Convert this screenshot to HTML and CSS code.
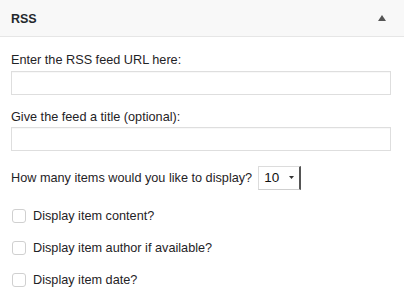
FILE: index.html
```html
<!DOCTYPE html>
<html>
<head>
<meta charset="utf-8">
<link rel="stylesheet" href="styles.css">
</head>
<body>
<div class="widget">
  <div class="widget-head">
    <span class="widget-title">RSS</span>
    <svg class="toggle" width="8" height="6" viewBox="0 0 8 6"><path d="M0 6 L4 0 L8 6 Z" fill="#555"/></svg>
  </div>
  <div class="widget-body">
    <label class="field-label">Enter the RSS feed URL here:</label>
    <div class="text-input"></div>
    <label class="field-label second">Give the feed a title (optional):</label>
    <div class="text-input"></div>
    <div class="select-row">
      <span class="select-label">How many items would you like to display?</span>
      <span class="select">
        <span class="select-value">10</span>
        <svg class="select-arrow" width="5" height="3" viewBox="0 0 5 3"><path d="M0 0 L5 0 L2.5 3 Z" fill="#333"/></svg>
      </span>
    </div>
    <div class="check-row"><span class="checkbox"></span><span class="check-label">Display item content?</span></div>
    <div class="check-row"><span class="checkbox"></span><span class="check-label">Display item author if available?</span></div>
    <div class="check-row"><span class="checkbox"></span><span class="check-label">Display item date?</span></div>
  </div>
</div>
</body>
</html>
```
FILE: styles.css
```css
html, body {
  margin: 0;
  padding: 0;
  background: #fff;
}
body {
  font-family: "Liberation Sans", Arial, Helvetica, sans-serif;
  font-size: 12.7px;
  color: #1f2326;
}
.widget {
  width: 404px;
}
.widget-head {
  height: 37px;
  background: #f8f8f8;
  border-bottom: 1px solid #e6e6e6;
  display: flex;
  align-items: center;
  justify-content: space-between;
  padding: 0 18px 0 11px;
  box-sizing: border-box;
}
.widget-title {
  font-weight: bold;
  font-size: 12.5px;
  color: #23282d;
  padding-top: 1px;
}
.toggle {
  margin-top: -1px;
}
.widget-body {
  padding: 15px 13px 0 11px;
  display: flex;
  flex-direction: column;
}
.field-label {
  display: block;
  line-height: 16px;
  height: 16px;
  margin-bottom: 3px;
}
.field-label.second {
  margin-top: 14px;
  margin-bottom: 2px;
}
.text-input {
  height: 22px;
  border: 1px solid #dedede;
  background: #fff;
  box-shadow: inset 0 1px 1px rgba(0,0,0,0.03);
}
.select-row {
  display: flex;
  align-items: center;
  margin-top: 14px;
  height: 25px;
}
.select-label {
  line-height: 16px;
}
.select {
  margin-left: 6px;
  width: 43px;
  height: 24px;
  box-sizing: border-box;
  border: 1px solid #dcdcdc;
  border-right: 2px solid #555;
  border-bottom-color: #cfcfcf;
  display: flex;
  align-items: center;
  justify-content: space-between;
  padding: 0 5px 0 5px;
  background: #fff;
}
.select-value {
  font-size: 13.5px;
  color: #111;
}
.check-row {
  display: flex;
  align-items: center;
  height: 16px;
  margin-top: 16px;
}
.select-row + .check-row {
  margin-top: 18px;
}
.checkbox {
  width: 14px;
  height: 14px;
  box-sizing: border-box;
  border: 1px solid #d0d0d0;
  border-radius: 3px;
  margin-left: 1px;
  background: #fff;
}
.check-label {
  margin-left: 7px;
  line-height: 16px;
}
```
